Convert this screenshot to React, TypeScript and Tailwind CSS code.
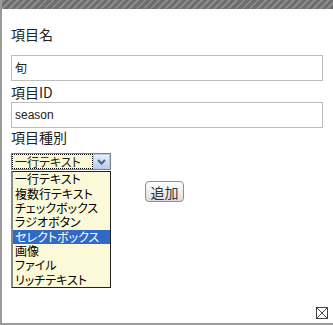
import React from "react";

const items = [
  "一行テキスト",
  "複数行テキスト",
  "チェックボックス",
  "ラジオボタン",
  "セレクトボックス",
  "画像",
  "ファイル",
  "リッチテキスト",
];

const jp = { fontFamily: '"Noto Sans CJK JP", "Noto Sans", sans-serif' };
const palt = { fontFeatureSettings: '"palt"' };

export default function App() {
  return (
    <div
      className="relative w-[333px] h-[325px] bg-white border-l-2 border-b-2 border-[#9a9a9a] flex flex-col text-[#222]"
      style={jp}
    >
      <div className="h-[9px] shrink-0 bg-[repeating-linear-gradient(-45deg,#6e6e6e_0px,#6e6e6e_3px,#8c8c8c_3px,#8c8c8c_5px)]" />
      <div className="pl-[9px] pr-[10px] flex flex-col">
        <div className="mt-[18px] h-[14px] text-[14px] leading-[14px]">項目名</div>
        <div className="mt-[14px] h-[26px] border border-[#bdbdbd] flex items-center pl-[3px] text-[12px] leading-[12px]">
          旬
        </div>
        <div className="mt-[4px] h-[14px] text-[14px] leading-[14px]">項目ID</div>
        <div
          className="mt-[3px] h-[26px] border border-[#bdbdbd] flex items-center pl-[3px] text-[12px] leading-[12px]"
          style={{ fontFamily: '"Liberation Sans", sans-serif' }}
        >
          season
        </div>
        <div className="mt-[2px] h-[14px] text-[14px] leading-[14px]">項目種別</div>
        <div className="mt-[9px] w-[100px] h-[17px] border border-[#7f7f7f] bg-[#fbf8d6] flex">
          <div
            className="flex-1 border border-dotted border-black flex items-center pl-[2px] text-[12px] leading-[12px] whitespace-nowrap overflow-hidden"
            style={palt}
          >
            一行テキスト
          </div>
          <div className="w-[17px] h-full border border-[#b6c9ef] bg-gradient-to-b from-[#e6eefc] to-[#bccdf4] flex items-center justify-center">
            <svg width="9" height="6" viewBox="0 0 9 6">
              <path d="M1 1 L4.5 4.5 L8 1" stroke="#4d6185" strokeWidth="2" fill="none" />
            </svg>
          </div>
        </div>
        <div className="mt-[11px] ml-[134px] w-[39px] h-[21px] rounded-[4px] border border-[#8e8e8e] bg-gradient-to-b from-white to-[#dedede] flex items-center justify-center text-[14px] leading-[14px] text-[#333]">
          追加
        </div>
      </div>
      <div className="absolute left-[9px] top-[171px] w-[100px] h-[117px] border border-[#222] border-l-2 border-l-[#8a8a8a] bg-[#fbf9d8] flex flex-col">
        {items.map((t, i) => (
          <div
            key={t}
            style={palt}
            className={
              i === 4
                ? "h-[14.4px] flex items-center pl-[2px] text-[12px] leading-[14px] whitespace-nowrap bg-[#316ac5] text-white"
                : "h-[14.4px] flex items-center pl-[2px] text-[12px] leading-[14px] whitespace-nowrap text-black"
            }
          >
            {t}
          </div>
        ))}
      </div>
      <div className="mt-auto self-end mr-[5px] mb-[4px] w-[12px] h-[12px]">
        <svg width="12" height="12" viewBox="0 0 12 12">
          <rect x="0.5" y="0.5" width="11" height="11" fill="none" stroke="#444" />
          <path d="M1 1 L11 11 M11 1 L1 11" stroke="#444" strokeWidth="1" />
        </svg>
      </div>
    </div>
  );
}
